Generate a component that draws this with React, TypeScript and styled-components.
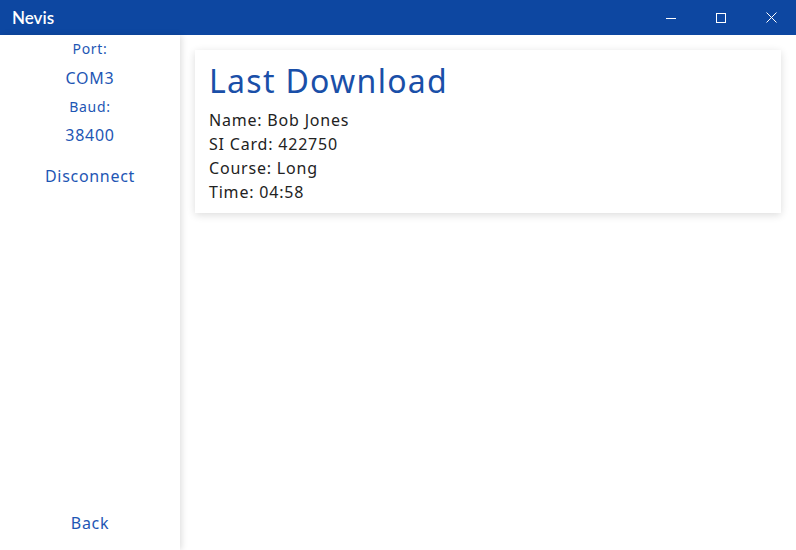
import React from "react";
import styled, { createGlobalStyle } from "styled-components";

const colors = {
  bar: "#0d47a1",
  blue: "#1e56b4",
  title: "#1a4fa8",
  text: "#222222",
};

const GlobalStyle = createGlobalStyle`
  html, body, #root {
    margin: 0;
    padding: 0;
    height: 100%;
  }
  body {
    font-family: "Noto Sans", "DejaVu Sans", sans-serif;
    background: #ffffff;
    overflow: hidden;
  }
`;

const Window = styled.div`
  display: flex;
  flex-direction: column;
  width: 796px;
  height: 550px;
`;

const TitleBar = styled.div`
  display: flex;
  align-items: center;
  justify-content: space-between;
  height: 35px;
  background: ${colors.bar};
  color: #ffffff;
  flex-shrink: 0;
`;

const AppName = styled.span`
  font-family: Lato, "Noto Sans", sans-serif;
  font-weight: 600;
  font-size: 17px;
  padding-left: 12px;
`;

const Controls = styled.div`
  display: flex;
  height: 100%;
`;

const ControlButton = styled.div`
  display: flex;
  align-items: center;
  justify-content: center;
  width: 50px;
  height: 100%;
`;

const Body = styled.div`
  display: flex;
  flex: 1;
  min-height: 0;
`;

const Sidebar = styled.nav`
  display: flex;
  flex-direction: column;
  align-items: center;
  justify-content: space-between;
  width: 180px;
  flex-shrink: 0;
  padding: 4px 0 15px;
  box-sizing: border-box;
  box-shadow: 2px 0 6px rgba(0, 0, 0, 0.12);
  z-index: 1;
  color: ${colors.blue};
  letter-spacing: 0.7px;
`;

const Group = styled.div`
  display: flex;
  flex-direction: column;
  align-items: center;
`;

const Label = styled.div<{ $size: number; $height: number }>`
  font-size: ${({ $size }) => $size}px;
  line-height: ${({ $height }) => $height}px;
`;

const SideLink = styled.div<{ $gap?: number }>`
  font-size: 16px;
  line-height: 24px;
  margin-top: ${({ $gap }) => $gap ?? 0}px;
  cursor: pointer;
`;

const Main = styled.main`
  flex: 1;
  padding: 15px 15px 0 15px;
`;

const Card = styled.section`
  background: #ffffff;
  box-shadow: 0 2px 8px rgba(0, 0, 0, 0.14);
  padding: 10px 14px 9px;
`;

const CardTitle = styled.h1`
  margin: 0 0 6px;
  font-weight: 400;
  font-size: 32px;
  line-height: 42px;
  letter-spacing: 1.3px;
  color: ${colors.title};
`;

const Line = styled.div`
  font-size: 16px;
  line-height: 24px;
  letter-spacing: 0.8px;
  color: ${colors.text};
`;

const details = [
  "Name: Bob Jones",
  "SI Card: 422750",
  "Course: Long",
  "Time: 04:58",
];

export default function App() {
  return (
    <>
      <GlobalStyle />
      <Window>
        <TitleBar>
          <AppName>Nevis</AppName>
          <Controls>
            <ControlButton>
              <svg width="10" height="10" viewBox="0 0 10 10">
                <line x1="0" y1="5.5" x2="10" y2="5.5" stroke="#fff" strokeWidth="1" />
              </svg>
            </ControlButton>
            <ControlButton>
              <svg width="10" height="10" viewBox="0 0 10 10">
                <rect x="0.5" y="0.5" width="9" height="9" fill="none" stroke="#fff" strokeWidth="1" />
              </svg>
            </ControlButton>
            <ControlButton>
              <svg width="11" height="11" viewBox="0 0 11 11">
                <path d="M0.5 0.5 L10.5 10.5 M10.5 0.5 L0.5 10.5" stroke="#fff" strokeWidth="1" />
              </svg>
            </ControlButton>
          </Controls>
        </TitleBar>
        <Body>
          <Sidebar>
            <Group>
              <Label $size={14} $height={20}>Port:</Label>
              <Label $size={16} $height={38}>COM3</Label>
              <Label $size={14} $height={20}>Baud:</Label>
              <Label $size={16} $height={36}>38400</Label>
              <SideLink $gap={11}>Disconnect</SideLink>
            </Group>
            <SideLink>Back</SideLink>
          </Sidebar>
          <Main>
            <Card>
              <CardTitle>Last Download</CardTitle>
              {details.map((d) => (
                <Line key={d}>{d}</Line>
              ))}
            </Card>
          </Main>
        </Body>
      </Window>
    </>
  );
}
